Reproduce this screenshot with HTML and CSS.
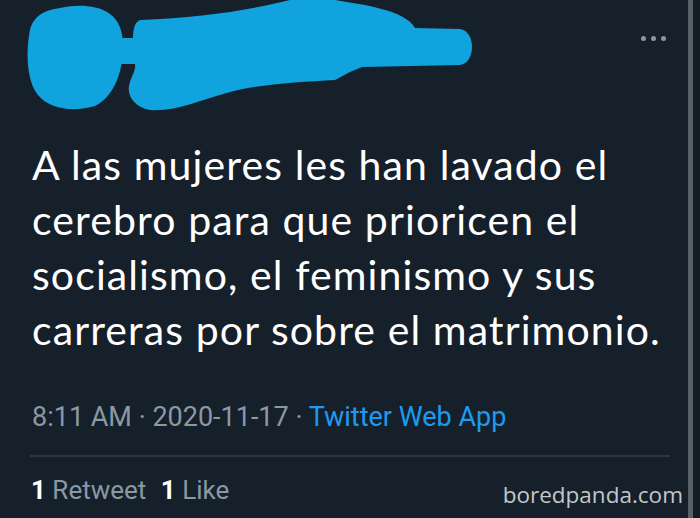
FILE: index.html
```html
<!DOCTYPE html>
<html lang="es">
<head>
<meta charset="utf-8">
<link rel="stylesheet" href="styles.css">
</head>
<body>
<div class="frame">
  <main class="tweet">
    <header class="head">
      <svg class="scribble" width="480" height="118" viewBox="0 0 480 118">
        <path fill="#10a3dd" d="M60 8 C90 2 118 8 122 35 C126 60 118 95 95 106 C75 112 50 110 38 95 C26 80 26 50 30 30 C34 15 45 10 60 8 Z"/>
        <rect fill="#10a3dd" x="115" y="38" width="28" height="26"/>
        <path fill="#10a3dd" d="M140 20 C200 18 250 10 290 0 L335 0 C365 5 405 10 415 28 L460 29 C476 31 476 63 460 65 L362 67 L350 72 L335 80 C300 82 260 84 230 92 C200 100 175 112 150 110 C135 108 125 95 130 82 C132 75 136 70 135 64 L133 40 C133 28 135 22 140 20 Z"/>
      </svg>
      <div class="dots"><span></span><span></span><span></span></div>
    </header>
    <p class="text">A las mujeres les han lavado el cerebro para que prioricen el socialismo, el feminismo y sus carreras por sobre el matrimonio.</p>
    <div class="meta">8:11 AM · 2020-11-17 · <span class="app">Twitter Web App</span></div>
    <hr class="rule">
    <div class="stats">
      <div class="counts"><b>1</b> Retweet <b class="gap">1</b> Like</div>
      <div class="mark">boredpanda.com</div>
    </div>
  </main>
  <div class="bar"></div>
  <div class="edge"></div>
</div>
</body>
</html>
```

FILE: styles.css
```css
html, body {
  margin: 0;
  padding: 0;
  background: #16202a;
}
.frame {
  display: flex;
  width: 700px;
  height: 518px;
  overflow: hidden;
}
.tweet {
  width: 688px;
  flex: none;
}
.bar {
  width: 5px;
  background: #596167;
  flex: none;
}
.edge {
  flex: 1;
  background: #141c24;
}
.head {
  height: 137px;
  display: flex;
  justify-content: space-between;
  align-items: flex-start;
}
.scribble {
  display: block;
}
.dots {
  display: flex;
  gap: 5px;
  margin: 36px 22px 0 0;
}
.dots span {
  width: 5px;
  height: 5px;
  border-radius: 50%;
  background: #8d959c;
}
.text {
  margin: 0 0 0 32px;
  width: 652px;
  font-family: "Lato", sans-serif;
  font-size: 41px;
  letter-spacing: 1.1px;
  line-height: 55px;
  color: #ffffff;
}
.meta {
  margin: 45px 0 0 32px;
  font-family: "Roboto", "Liberation Sans", sans-serif;
  font-size: 27px;
  line-height: 30px;
  color: #8b98a5;
}
.app {
  color: #1d9bf0;
}
.rule {
  margin: 23px 18px 0 30px;
  border: 0;
  height: 2px;
  background: #2c3640;
}
.stats {
  margin: 18px 5px 0 31px;
  display: flex;
  justify-content: space-between;
  align-items: baseline;
}
.counts {
  font-family: "Roboto", "Liberation Sans", sans-serif;
  font-size: 26px;
  line-height: 30px;
  color: #8b98a5;
}
.counts b {
  color: #ffffff;
  font-weight: 700;
}
.counts .gap {
  margin-left: 8px;
}
.mark {
  font-family: "Open Sans", sans-serif;
  font-size: 22.5px;
  color: #c3c7cb;
  position: relative;
  top: 4px;
}
```
